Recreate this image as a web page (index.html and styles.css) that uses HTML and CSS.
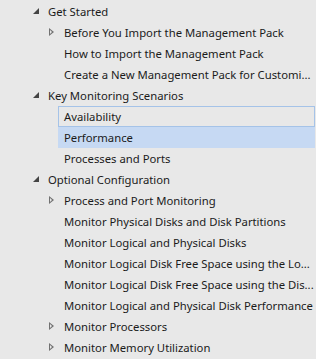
FILE: index.html
```html
<!DOCTYPE html>
<html lang="en">
<head>
    <meta charset="UTF-8">
    <title>Management Pack Guide</title>
    <link rel="stylesheet" href="styles.css">
</head>
<body>
    <div class="tree">
        <div class="row lvl0"><span class="toggle open"></span><span class="label">Get Started</span></div>
        <div class="row lvl1"><span class="toggle closed"></span><span class="label">Before You Import the Management Pack</span></div>
        <div class="row lvl1"><span class="toggle"></span><span class="label">How to Import the Management Pack</span></div>
        <div class="row lvl1"><span class="toggle"></span><span class="label">Create a New Management Pack for Customi...</span></div>
        <div class="row lvl0"><span class="toggle open"></span><span class="label">Key Monitoring Scenarios</span></div>
        <div class="row lvl1"><span class="toggle"></span><span class="label focused">Availability</span></div>
        <div class="row lvl1"><span class="toggle"></span><span class="label selected">Performance</span></div>
        <div class="row lvl1"><span class="toggle"></span><span class="label">Processes and Ports</span></div>
        <div class="row lvl0"><span class="toggle open"></span><span class="label">Optional Configuration</span></div>
        <div class="row lvl1"><span class="toggle closed"></span><span class="label">Process and Port Monitoring</span></div>
        <div class="row lvl1"><span class="toggle"></span><span class="label">Monitor Physical Disks and Disk Partitions</span></div>
        <div class="row lvl1"><span class="toggle"></span><span class="label">Monitor Logical and Physical Disks</span></div>
        <div class="row lvl1"><span class="toggle"></span><span class="label">Monitor Logical Disk Free Space using the Lo...</span></div>
        <div class="row lvl1"><span class="toggle"></span><span class="label">Monitor Logical Disk Free Space using the Dis...</span></div>
        <div class="row lvl1"><span class="toggle"></span><span class="label">Monitor Logical and Physical Disk Performance</span></div>
        <div class="row lvl1"><span class="toggle closed"></span><span class="label">Monitor Processors</span></div>
        <div class="row lvl1"><span class="toggle closed"></span><span class="label">Monitor Memory Utilization</span></div>
    </div>
</body>
</html>
```

FILE: styles.css
```css
* { margin: 0; padding: 0; box-sizing: border-box; }
body { background: #e8e8e8; font-family: "Noto Sans", "Open Sans", sans-serif; font-size: 11.3px; color: #1b1b1b; overflow: hidden; }
.tree { padding-top: 1px; display: flex; flex-direction: column; }
.row { display: flex; align-items: stretch; height: 21px; margin-right: 1px; }
.row.lvl0 { padding-left: 32px; }
.row.lvl1 { padding-left: 48px; }
.toggle { width: 10px; position: relative; flex: none; }
.toggle.open::before { content: ""; position: absolute; left: 1px; top: 7px; border-style: solid; border-width: 0 0 6px 6px; border-color: transparent transparent #444 transparent; }
.toggle.closed::before { content: ""; position: absolute; left: 1px; top: 6px; border-style: solid; border-width: 4px 0 4px 5px; border-color: transparent transparent transparent #717171; }
.toggle.closed::after { content: ""; position: absolute; left: 2px; top: 8px; border-style: solid; border-width: 2px 0 2px 2.5px; border-color: transparent transparent transparent #e8e8e8; }
.label { flex: 1; padding-left: 6px; padding-top: 1px; line-height: 20px; white-space: nowrap; overflow: hidden; }
.label.focused { border: 1px solid #a5c3e8; padding-left: 5px; padding-top: 0; line-height: 19px; }
.label.selected { background: #c6d9f3; }
```
